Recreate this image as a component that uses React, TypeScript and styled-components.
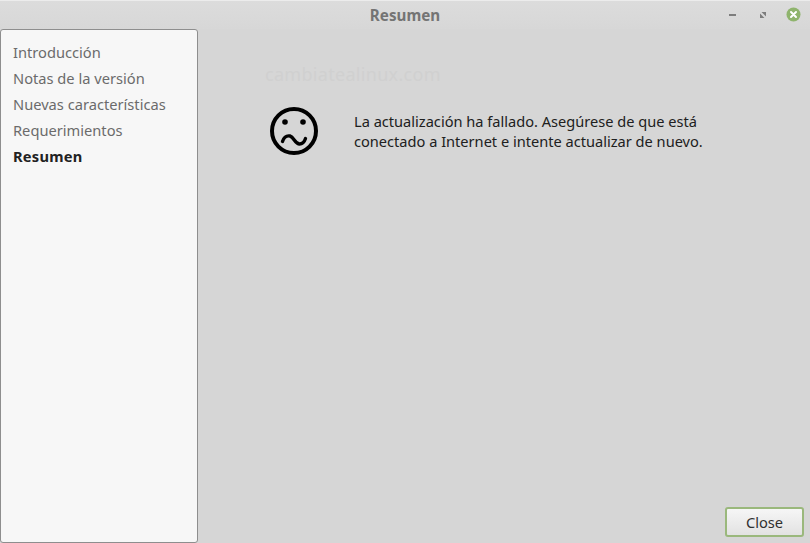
import React from 'react';
import styled, { createGlobalStyle } from 'styled-components';

const GlobalStyle = createGlobalStyle`
  html, body {
    margin: 0;
    padding: 0;
    background: #d6d6d6;
    font-family: "Noto Sans", "Open Sans", sans-serif;
  }
`;

const Window = styled.div`
  width: 810px;
  height: 543px;
  display: flex;
  flex-direction: column;
  overflow: hidden;
  background: #d6d6d6;
`;

const TitleBar = styled.header`
  height: 29px;
  flex-shrink: 0;
  display: grid;
  grid-template-columns: 1fr auto 1fr;
  align-items: center;
  box-sizing: border-box;
  border-top: 1px solid #ececec;
  background: linear-gradient(#dcdcdc, #d7d7d7);
`;

const Title = styled.div`
  grid-column: 2;
  font-size: 15.2px;
  font-weight: 700;
  color: #747474;
  line-height: 29px;
`;

const WindowButtons = styled.div`
  grid-column: 3;
  justify-self: end;
  display: flex;
  align-items: center;
  gap: 19px;
  padding: 0 9px 2px 0;
`;

const Body = styled.div`
  flex: 1;
  display: flex;
  min-height: 0;
`;

const Sidebar = styled.nav`
  width: 198px;
  box-sizing: border-box;
  flex-shrink: 0;
  background: #f7f7f7;
  border: 1px solid #8e8e8e;
  border-radius: 3px;
  padding: 9px 0 0 12px;
  display: flex;
  flex-direction: column;
`;

const NavItem = styled.div<{ $active?: boolean }>`
  height: 26px;
  line-height: 26px;
  font-size: 14.67px;
  white-space: nowrap;
  font-weight: ${(p) => (p.$active ? 700 : 400)};
  letter-spacing: ${(p) => (p.$active ? '0.25px' : '0')};
  color: ${(p) => (p.$active ? '#222222' : '#6b6b6b')};
`;

const Content = styled.main`
  flex: 1;
  display: flex;
  flex-direction: column;
  min-width: 0;
`;

const Page = styled.div`
  flex: 1;
  padding: 32px 0 0 67px;
`;

const Watermark = styled.div`
  font-size: 18px;
  line-height: 26px;
  letter-spacing: 0.3px;
  color: #d0d0d0;
`;

const Message = styled.div`
  display: flex;
  align-items: flex-start;
  margin-top: 18px;
`;

const Sad = styled.svg`
  width: 50px;
  height: 50px;
  flex-shrink: 0;
  margin: 1px 0 0 4px;
`;

const MessageText = styled.p`
  margin: 6px 0 0 35px;
  font-size: 14.6px;
  line-height: 20px;
  color: #202020;
`;

const Footer = styled.footer`
  display: flex;
  justify-content: flex-end;
  padding: 0 6px 6px 0;
`;

const CloseButton = styled.button`
  width: 79px;
  height: 30px;
  box-sizing: border-box;
  border: 2px solid #9ab87c;
  border-radius: 3px;
  background: linear-gradient(#f6f6f6, #e2e2e2);
  font-family: inherit;
  font-size: 14.67px;
  color: #303030;
  padding: 0;
`;

const App = () => {
  const steps = ['Introducción', 'Notas de la versión', 'Nuevas características', 'Requerimientos'];

  return (
    <Window>
      <GlobalStyle />
      <TitleBar>
        <Title>Resumen</Title>
        <WindowButtons>
          <svg width="11" height="8" viewBox="0 0 11 8">
            <rect x="0" y="3" width="7" height="2" fill="#7d7d7d" />
          </svg>
          <svg width="8" height="8" viewBox="0 0 8 8">
            <path d="M2.5 1H7v4.5zM1 2.5L5.5 7H1z" fill="#7d7d7d" />
          </svg>
          <svg width="15" height="15" viewBox="0 0 15 15">
            <circle cx="7.5" cy="7.5" r="7" fill="#8fb46d" />
            <path d="M5 5l5 5M10 5l-5 5" stroke="#ffffff" strokeWidth="2" strokeLinecap="round" />
          </svg>
        </WindowButtons>
      </TitleBar>
      <Body>
        <Sidebar>
          {steps.map((step) => (
            <NavItem key={step}>{step}</NavItem>
          ))}
          <NavItem $active>Resumen</NavItem>
        </Sidebar>
        <Content>
          <Page>
            <Watermark>cambiatealinux.com</Watermark>
            <Message>
              <Sad viewBox="0 0 50 50">
                <circle cx="25" cy="25" r="22" fill="none" stroke="#000000" strokeWidth="4" />
                <circle cx="16" cy="16" r="2.8" fill="#000000" />
                <circle cx="34" cy="16" r="2.8" fill="#000000" />
                <path
                  d="M13.5 35.5C15 31 18 29.5 21 30C25 31 26 38 30.5 38C33.5 38 35.5 35.5 36.5 32.5"
                  fill="none"
                  stroke="#000000"
                  strokeWidth="3.4"
                  strokeLinecap="round"
                />
              </Sad>
              <MessageText>
                La actualización ha fallado. Asegúrese de que está
                <br />
                conectado a Internet e intente actualizar de nuevo.
              </MessageText>
            </Message>
          </Page>
          <Footer>
            <CloseButton>Close</CloseButton>
          </Footer>
        </Content>
      </Body>
    </Window>
  );
};

export default App;
